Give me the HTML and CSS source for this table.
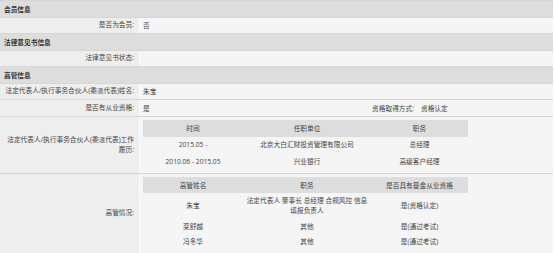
FILE: index.html
```html
<!DOCTYPE html>
<html lang="zh-CN">
<head>
<meta charset="utf-8">
<title>高管信息</title>
<link rel="stylesheet" href="styles.css">
</head>
<body>
<div class="panel">
  <div class="sec">会员信息</div>
  <div class="row">
    <div class="lb">是否为会员:</div>
    <div class="val">否</div>
  </div>
  <div class="sec">法律意见书信息</div>
  <div class="row">
    <div class="lb">法律意见书状态:</div>
    <div class="val"></div>
  </div>
  <div class="sec">高管信息</div>
  <div class="row">
    <div class="lb">法定代表人/执行事务合伙人(委派代表)姓名:</div>
    <div class="val">朱宝</div>
  </div>
  <div class="row row4">
    <div class="lb">是否有从业资格:</div>
    <div class="val">是</div>
    <div class="lb2">资格取得方式:</div>
    <div class="val val2">资格认定</div>
  </div>
  <div class="row tall">
    <div class="lb">法定代表人/执行事务合伙人(委派代表)工作履历:</div>
    <div class="val">
      <table class="sub">
        <colgroup><col class="c1"><col class="c2"><col class="c3"></colgroup>
        <thead>
          <tr><th>时间</th><th>任职单位</th><th>职务</th></tr>
        </thead>
        <tbody>
          <tr><td>2015.05 -</td><td>北京大白汇财投资管理有限公司</td><td>总经理</td></tr>
          <tr><td>2010.06 - 2015.05</td><td>兴业银行</td><td>高级客户经理</td></tr>
        </tbody>
      </table>
    </div>
  </div>
  <div class="row tall">
    <div class="lb">高管情况:</div>
    <div class="val">
      <table class="sub sub2">
        <colgroup><col class="c1"><col class="c2"><col class="c3"></colgroup>
        <thead>
          <tr><th>高管姓名</th><th>职务</th><th>是否具有基金从业资格</th></tr>
        </thead>
        <tbody>
          <tr class="two"><td>朱宝</td><td>法定代表人 董事长 总经理 合规风控 信息 填报负责人</td><td>是(资格认定)</td></tr>
          <tr><td>栾舒越</td><td>其他</td><td>是(通过考试)</td></tr>
          <tr><td>冯冬华</td><td>其他</td><td>是(通过考试)</td></tr>
        </tbody>
      </table>
    </div>
  </div>
</div>
</body>
</html>
```
FILE: styles.css
```css
* { box-sizing: border-box; }
html, body { margin: 0; padding: 0; background: #ffffff; }
body {
  font-family: "Open Sans", "Noto Sans CJK SC", sans-serif;
  font-size: 6.7px;
  color: #444444;
}
.panel {
  width: 553px;
  border-bottom: 1px solid #d9d9d9;
}
.sec {
  height: 16.5px;
  border-top: 1px solid #d6d6d6;
  background: #dddddd;
  padding-left: 4px;
  font-weight: bold;
  color: #333333;
  display: flex;
  align-items: center;
}
.row {
  display: grid;
  grid-template-columns: 139px 1fr;
  min-height: 16.5px;
  border-top: 1px solid #d6d6d6;
}
.row4 {
  grid-template-columns: 139px 1fr auto 136px;
}
.lb {
  background: #eeeeee;
  text-align: right;
  padding: 0 5px 0 3px;
  display: flex;
  align-items: center;
  justify-content: flex-end;
  line-height: 10px;
}
.lb2 {
  background: #f5f5f5;
  padding-right: 3px;
  display: flex;
  align-items: center;
}
.val {
  background: #f5f5f5;
  border-left: 1px solid #fafafa;
  padding-left: 3px;
  display: flex;
  align-items: center;
}
.val2 { border-left: none; padding-left: 4px; }
.tall .val { padding-top: 3.5px; padding-bottom: 3px; }
.sub {
  width: 325px;
  border-collapse: collapse;
  table-layout: fixed;
}
.sub col.c1 { width: 100px; }
.sub col.c2 { width: 128px; }
.sub col.c3 { width: 97px; }
.sub th {
  background: #dddddd;
  font-weight: normal;
  height: 16.5px;
  padding: 0;
  text-align: center;
}
.sub td {
  height: 16.5px;
  padding: 0 3px;
  text-align: center;
  line-height: 9.5px;
}
.sub2 th { height: 16px; }
.sub2 td { height: 15.5px; }
.sub2 tr.two td { height: 25.5px; }
```
